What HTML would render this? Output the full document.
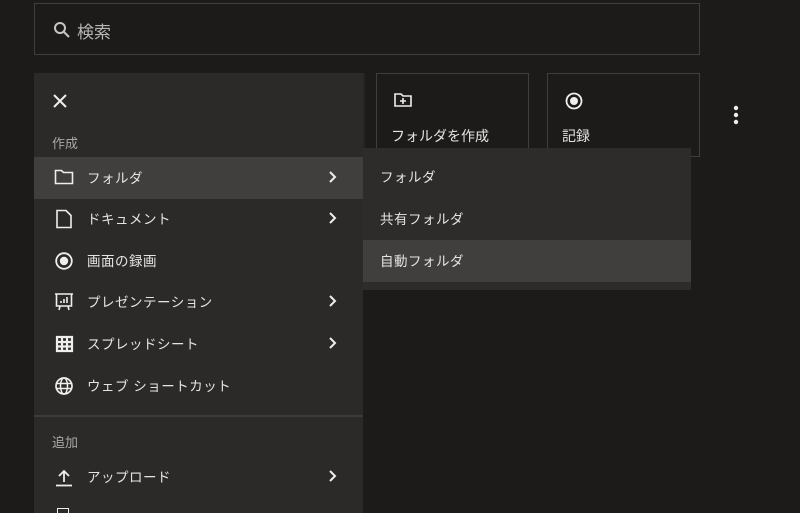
<!DOCTYPE html>
<html><head><meta charset="utf-8"><style>
*{margin:0;padding:0;box-sizing:border-box}
body{width:800px;height:511px;overflow:hidden;background:#1c1b1a;font-family:"Liberation Sans","Noto Sans CJK JP",sans-serif;color:#e6e4e2;position:relative}
.abs{position:absolute}
.search{left:34px;top:3px;width:666px;height:52px;border:1px solid #3f3e3d;}
.search span{position:absolute;left:42px;top:14px;font-size:17px;color:#b8b6b3}
.card{top:73px;width:153px;height:84px;border:1px solid #3f3e3d;}
.card .t{position:absolute;left:14px;top:52px;font-size:14px}
.menu{left:34px;top:73px;width:329px;height:440px;background:#2b2a29}
.row{position:absolute;left:0;width:329px;height:42px;font-size:13.5px;letter-spacing:0.5px}
.row .l{position:absolute;left:53px;top:10px}
.row svg.i{position:absolute;left:20px;top:11px}
.row .ch{position:absolute;left:294px;top:13px}
.hd{position:absolute;left:18px;font-size:13px;color:#a9a7a4}
.sub{left:363px;top:148px;width:328px;height:142px;background:#2d2c2b}
.sub .row{width:328px}
.sub .row .l{left:17px}
</style></head><body>
<div class="abs search">
<svg class="abs" style="left:18px;top:17px" width="18" height="18" viewBox="0 0 18 18"><circle cx="7" cy="7" r="5" fill="none" stroke="#c8c6c3" stroke-width="2"/><path d="M11 11l5 5" stroke="#c8c6c3" stroke-width="2"/></svg>
<span>検索</span></div>
<div class="abs" style="left:205px;top:73px;width:160px;height:84px;background:#252423"></div>
<div class="abs card" style="left:376px">
<svg class="abs" style="left:17px;top:18px" width="18" height="16" viewBox="0 0 18 16"><path d="M1 2h6l2 2h8v10H1z" fill="none" stroke="#eee" stroke-width="1.6"/><path d="M9 6v6M6 9h6" stroke="#eee" stroke-width="1.6"/></svg>
<div class="t">フォルダを作成</div></div>
<div class="abs card" style="left:547px">
<svg class="abs" style="left:17px;top:18px" width="18" height="18" viewBox="0 0 18 18"><circle cx="9" cy="9" r="7.5" fill="none" stroke="#eee" stroke-width="1.8"/><circle cx="9" cy="9" r="4" fill="#eee"/></svg>
<div class="t">記録</div></div>
<svg class="abs" style="left:732px;top:105px" width="8" height="20" viewBox="0 0 8 20"><circle cx="4" cy="3" r="2.2" fill="#eee"/><circle cx="4" cy="10" r="2.2" fill="#eee"/><circle cx="4" cy="17" r="2.2" fill="#eee"/></svg>

<div class="abs menu">
<svg class="abs" style="left:19px;top:21px" width="14" height="14" viewBox="0 0 14 14"><path d="M1 1l12 12M13 1L1 13" stroke="#eee" stroke-width="2"/></svg>
<div class="hd" style="top:60px">作成</div>
<div class="row" style="top:84px;background:#403f3e"><svg class="i" width="20" height="18" viewBox="0 0 20 18"><path d="M1.5 2.5h6l2 2h9v11h-17z" fill="none" stroke="#eee" stroke-width="1.6"/></svg><span class="l">フォルダ</span><svg class="ch" width="10" height="14" viewBox="0 0 10 14"><path d="M2 2l5 5-5 5" fill="none" stroke="#eee" stroke-width="2"/></svg></div>
<div class="row" style="top:125px"><svg class="i" width="20" height="20" viewBox="0 0 20 20"><path d="M3 1.5h9l5 5v12H3z" fill="none" stroke="#eee" stroke-width="1.6"/></svg><span class="l">ドキュメント</span><svg class="ch" width="10" height="14" viewBox="0 0 10 14"><path d="M2 2l5 5-5 5" fill="none" stroke="#eee" stroke-width="2"/></svg></div>
<div class="row" style="top:167px"><svg class="i" width="20" height="20" viewBox="0 0 20 20"><circle cx="10" cy="10" r="7.8" fill="none" stroke="#eee" stroke-width="1.8"/><circle cx="10" cy="10" r="4.2" fill="#eee"/></svg><span class="l">画面の録画</span></div>
<div class="row" style="top:208px"><svg class="i" width="20" height="20" viewBox="0 0 20 20"><path d="M1 2h18M2.5 2v12h15V2M6 14l-1 4M14 14l1 4" fill="none" stroke="#eee" stroke-width="1.6"/><path d="M7 11V9M10 11V7M13 11V5" stroke="#eee" stroke-width="1.6"/></svg><span class="l">プレゼンテーション</span><svg class="ch" width="10" height="14" viewBox="0 0 10 14"><path d="M2 2l5 5-5 5" fill="none" stroke="#eee" stroke-width="2"/></svg></div>
<div class="row" style="top:250px"><svg class="i" width="20" height="20" viewBox="0 0 20 20"><path d="M3 3h15v14H3zM3 8h15M3 12.5h15M8 3v14M13 3v14" fill="none" stroke="#eee" stroke-width="2.2"/></svg><span class="l">スプレッドシート</span><svg class="ch" width="10" height="14" viewBox="0 0 10 14"><path d="M2 2l5 5-5 5" fill="none" stroke="#eee" stroke-width="2"/></svg></div>
<div class="row" style="top:292px"><svg class="i" width="20" height="20" viewBox="0 0 20 20"><circle cx="10" cy="10" r="8" fill="none" stroke="#eee" stroke-width="1.7"/><ellipse cx="10" cy="10" rx="3.5" ry="8" fill="none" stroke="#eee" stroke-width="1.5"/><path d="M2 7.5h16M2 12.5h16" stroke="#eee" stroke-width="1.5"/></svg><span class="l">ウェブ ショートカット</span></div>
<div class="abs" style="left:0;top:342px;width:329px;height:2px;background:#3c3b3a"></div>
<div class="hd" style="top:359px">追加</div>
<div class="row" style="top:383px"><svg class="i" width="20" height="20" viewBox="0 0 20 20"><path d="M10 15V4M5 9l5-5 5 5M2 18.5h16" fill="none" stroke="#eee" stroke-width="1.8"/></svg><span class="l">アップロード</span><svg class="ch" width="10" height="14" viewBox="0 0 10 14"><path d="M2 2l5 5-5 5" fill="none" stroke="#eee" stroke-width="2"/></svg></div>
<div class="abs" style="left:23px;top:435px;width:12px;height:5px;border:1.6px solid #eee;border-bottom:none"></div>
</div>

<div class="abs sub">
<div class="row" style="top:8px"><span class="l">フォルダ</span></div>
<div class="row" style="top:50px"><span class="l">共有フォルダ</span></div>
<div class="row" style="top:92px;background:#403f3e"><span class="l">自動フォルダ</span></div>
</div>
</body></html>
